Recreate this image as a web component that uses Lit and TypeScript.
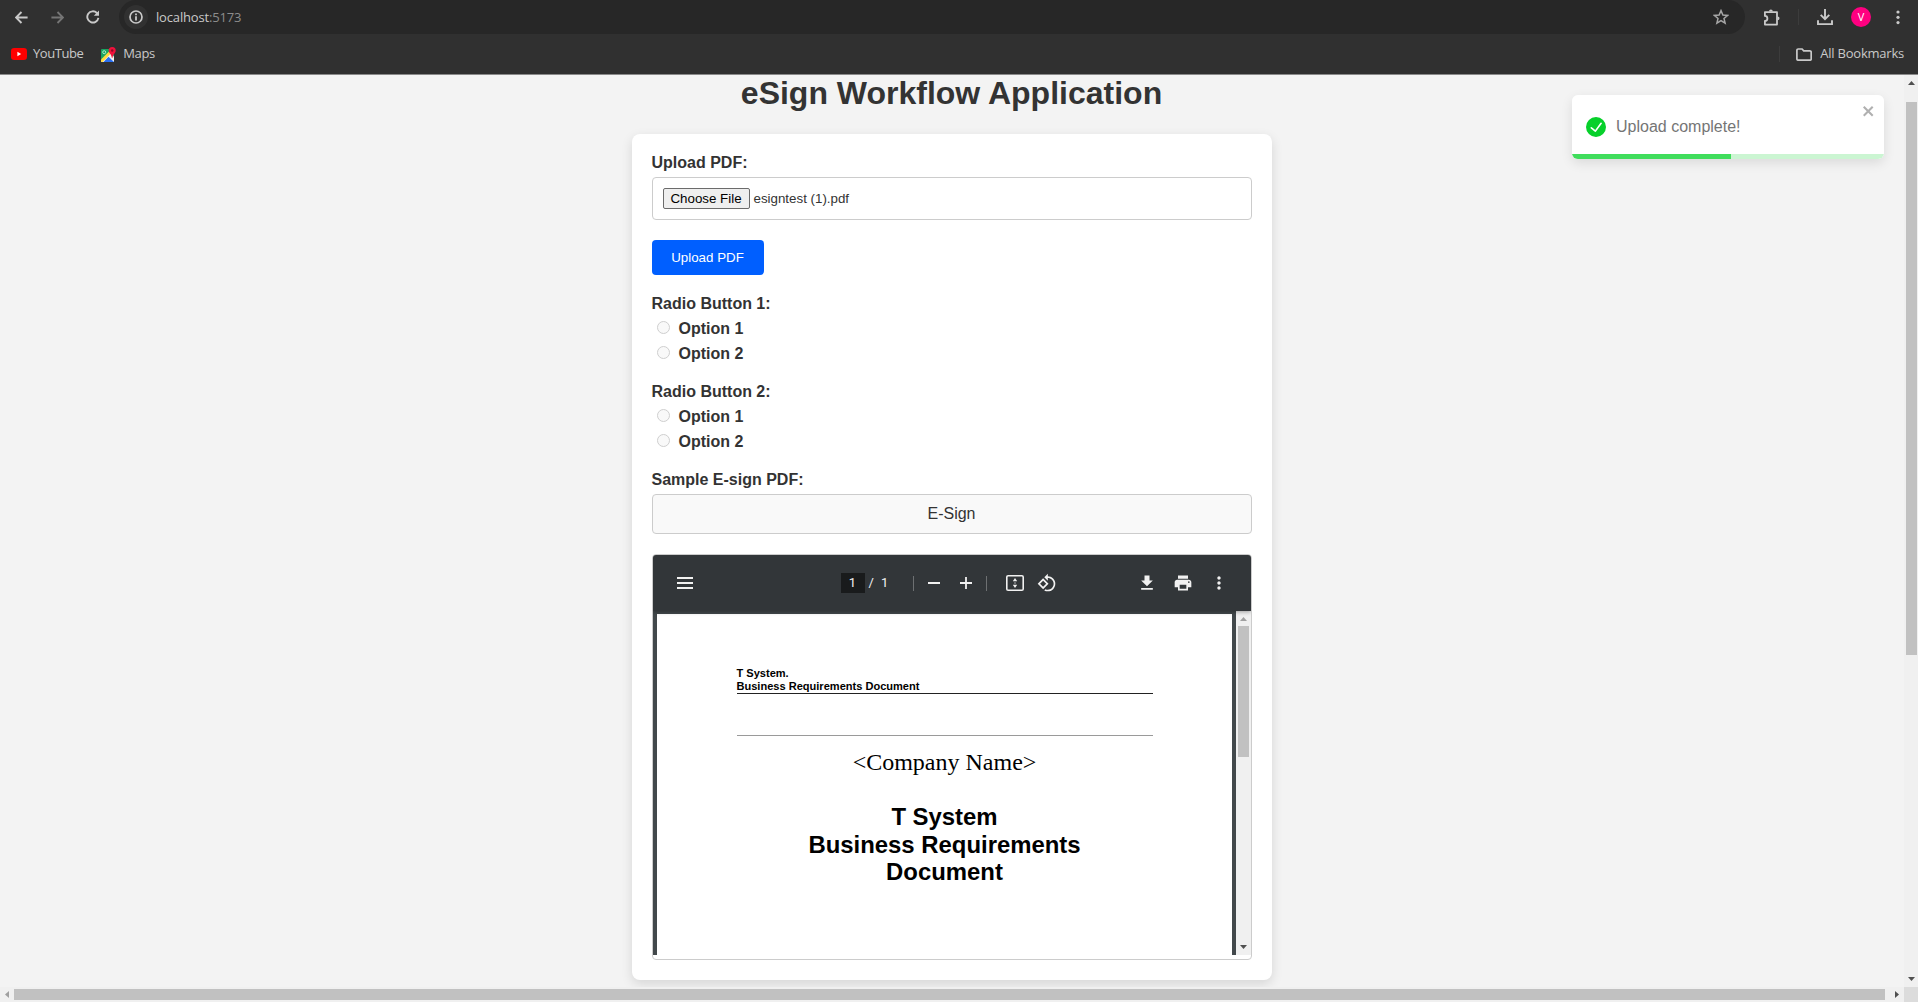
import { LitElement, html, css, svg } from "lit";
import { customElement } from "lit/decorators.js";

const icon = (w: number, h: number, view: string, body: unknown, cls = "") =>
  html`<svg class="icon ${cls}" width=${w} height=${h} viewBox=${view} aria-hidden="true">${body}</svg>`;

const arrowBack = svg`<path d="M6.5 1 1 6.5 6.5 12M1.2 6.5H12.6" fill="none" stroke="currentColor" stroke-width="1.9"/>`;
const arrowForward = svg`<path d="M6.5 1 12 6.5 6.5 12M.4 6.5H11.8" fill="none" stroke="currentColor" stroke-width="1.9"/>`;
const reload = svg`<path d="M12.4 7.9A5.6 5.6 0 1 1 10.9 3L12 4.2" fill="none" stroke="currentColor" stroke-width="1.9"/><path d="M13 .6V5.8H7.8Z" fill="currentColor"/>`;
const info = svg`<circle cx="7" cy="7" r="6" fill="none" stroke="currentColor" stroke-width="1.7"/><path d="M6.1 6.2h1.8v4.2H6.1zM6.1 3.6h1.8v1.7H6.1z" fill="currentColor"/>`;
const star = svg`<path d="M8 1.6 9.9 6l4.7.4-3.6 3.1 1.1 4.6L8 11.6l-4.1 2.5L5 9.5 1.4 6.4 6.1 6Z" fill="none" stroke="currentColor" stroke-width="1.5"/>`;
const puzzle = svg`<path d="M1.9 3.1H14V15.6H1.9V11.9A2.5 2.5 0 0 0 1.9 6.9Z" fill="none" stroke="currentColor" stroke-width="1.8" stroke-linejoin="round"/><path d="M6 2.5a1.9 1.9 0 0 1 3.8 0ZM14.6 7.4a1.9 1.9 0 0 1 0 3.8Z" fill="currentColor"/>`;
const tray = svg`<path d="M8 0v9.6M3.7 5.8 8 10.1l4.3-4.3M1 11.2V15.1H15V11.2" fill="none" stroke="currentColor" stroke-width="1.9"/>`;
const dots = svg`<circle cx="2" cy="2" r="1.6"/><circle cx="2" cy="7.3" r="1.6"/><circle cx="2" cy="12.6" r="1.6"/>`;
const youtube = svg`<rect width="16" height="12" rx="3.2" fill="#f00"/><path d="M6.4 3.7V8.3L10.2 6Z" fill="#fff"/>`;
const maps = svg`<rect x="0" y="2" width="13" height="13" rx="1" fill="#1aa260"/><path d="M0 14.5 9 5.5l4 4V15H0Z" fill="#f2f2f2"/><path d="M2.5 15 7.5 9.8 13 15Z" fill="#2a6ff0"/><path d="M0 12.4 8 4.5l2 2L1.5 15H0Z" fill="#ffd83d"/><circle cx="3.2" cy="5.2" r="1.5" fill="none" stroke="#b9f0d3" stroke-width=".9"/><path d="M11.2 0a3.5 3.5 0 0 1 3.5 3.5c0 2.7-2.8 3.7-3.1 7.3h-.8C10.5 7.2 7.7 6.2 7.7 3.5A3.5 3.5 0 0 1 11.2 0Z" fill="#f0113c"/><circle cx="11.2" cy="3.5" r="1.2" fill="#8c0b24"/>`;
const folder = svg`<path d="M.9 2.3Q.9 1 2.2 1H6.1L7.7 2.9H13.9Q15.2 2.9 15.2 4.2V11Q15.2 12.2 13.9 12.2H2.2Q.9 12.2.9 11Z" fill="none" stroke="currentColor" stroke-width="1.7"/>`;
const menu = svg`<path d="M0 0h16v2H0zM0 5h16v2H0zM0 10h16v2H0z"/>`;
const minus = svg`<path d="M0 5h12v2H0z"/>`;
const plus = svg`<path d="M0 5.1h5.1V0h1.8v5.1H12v1.8H6.9V12H5.1V6.9H0z"/>`;
const fit = svg`<rect x=".8" y=".8" width="16.4" height="14.4" rx="1.3" fill="none" stroke="currentColor" stroke-width="1.6"/><path d="M9 3 11.2 6.2H6.8ZM9 13 11.2 9.8H6.8ZM8.4 7.4h1.2v1.2H8.4z"/>`;
const rotate = svg`<path d="M7.34 6.41L.86 12.9l6.49 6.48 6.49-6.48-6.5-6.49zM3.69 12.9l3.66-3.66L11 12.9l-3.66 3.66-3.65-3.66zm15.67-6.26C17.61 4.88 15.3 4 13 4V.76L8.76 5 13 9.24V6c1.79 0 3.58.68 4.95 2.05 2.73 2.73 2.73 7.17 0 9.9C16.58 19.32 14.79 20 13 20c-.97 0-1.94-.21-2.84-.61l-1.49 1.49C10.02 21.62 11.51 22 13 22c2.3 0 4.61-.88 6.36-2.64 3.52-3.51 3.52-9.21 0-12.72z"/>`;
const save = svg`<path d="M19 9h-4V3H9v6H5l7 7 7-7zM5 18v2h14v-2H5z"/>`;
const printer = svg`<path d="M19 8H5c-1.66 0-3 1.34-3 3v6h4v4h12v-4h4v-6c0-1.66-1.34-3-3-3zm-3 11H8v-5h8v5zm3-7c-.55 0-1-.45-1-1s.45-1 1-1 1 .45 1 1-.45 1-1 1zm-1-9H6v4h12V3z"/>`;
const more = svg`<path d="M12 8c1.1 0 2-.9 2-2s-.9-2-2-2-2 .9-2 2 .9 2 2 2zm0 2c-1.1 0-2 .9-2 2s.9 2 2 2 2-.9 2-2-.9-2-2-2zm0 6c-1.1 0-2 .9-2 2s.9 2 2 2 2-.9 2-2-.9-2-2-2z"/>`;
const check = svg`<path d="M12 0a12 12 0 1 0 12 12A12.014 12.014 0 0 0 12 0zm6.927 8.2-6.845 9.289a1.011 1.011 0 0 1-1.43.188l-4.888-3.908a1 1 0 1 1 1.25-1.562l4.076 3.261 6.227-8.451a1 1 0 1 1 1.61 1.183z"/>`;
const cross = svg`<path fill-rule="evenodd" d="M7.71 8.23l3.75 3.75-1.48 1.48-3.75-3.75-3.75 3.75L1 11.98l3.75-3.75L1 4.48 2.48 3l3.75 3.75L9.98 3l1.48 1.48-3.75 3.75z"/>`;

const triangle = (dir: "up" | "down" | "left" | "right") => {
  const d = { up: "M0 4 3.5 0 7 4Z", down: "M0 0H7L3.5 4Z", left: "M4 0V7L0 3.5Z", right: "M0 0V7L4 3.5Z" }[dir];
  const flat = dir === "up" || dir === "down";
  return icon(flat ? 7 : 4, flat ? 4 : 7, flat ? "0 0 7 4" : "0 0 4 7", svg`<path d=${d}/>`, dir);
};

@customElement("browser-chrome")
export class BrowserChrome extends LitElement {
  static styles = css`
    :host { display: block; height: 74px; background: #303030; border-bottom: 1px solid #8a8a8a; color: #c9c9c9; font: 13px/20px "Open Sans", "Noto Sans", sans-serif; }
    .icon { display: block; flex: none; fill: currentColor; }
    .nav { display: flex; align-items: center; height: 34px; padding-left: 15px; }
    .forward { margin-left: 23px; color: #757575; }
    .reload { margin-left: 22px; }
    .bar { display: flex; align-items: center; height: 34px; width: 1626px; box-sizing: border-box; margin-left: 19px; padding: 0 16px 0 5px; border-radius: 17px; background: #272727; }
    .site { display: grid; place-items: center; width: 24px; height: 24px; border-radius: 50%; background: #313131; }
    .url { flex: 1; margin-left: 8px; letter-spacing: -0.16px; }
    .port { color: #8c8c8c; }
    .star { color: #a6a6a6; }
    .puzzle { margin-left: 18px; }
    .rule { width: 1px; height: 16px; background: #3c3c3c; }
    .rule.first { margin: 0 18px; }
    .avatar { display: grid; place-items: center; width: 20px; height: 20px; margin: 0 25px 0 18px; border-radius: 50%; background: #ff0080; color: #fff; font-size: 11px; }
    .marks { display: flex; align-items: center; height: 40px; padding: 0 14px 0 11px; }
    .mark { display: flex; align-items: center; }
    .mark.second { margin-left: 18px; }
    .name, .all { padding-bottom: 2px; }
    .name { margin-left: 6px; }
    .youtube { letter-spacing: -0.45px; }
    .maps { margin-left: 7px; letter-spacing: -0.4px; }
    .grow { flex: 1; }
    .all { margin-left: 8px; letter-spacing: -0.22px; }
    .folder { margin-left: 16px; }
  `;
  render() {
    return html`
      <div class="nav">
        ${icon(13, 13, "0 0 13 13", arrowBack)}
        ${icon(13, 13, "0 0 13 13", arrowForward, "forward")}
        ${icon(14, 14, "0 0 14 14", reload, "reload")}
        <div class="bar">
          <span class="site">${icon(14, 14, "0 0 14 14", info)}</span>
          <span class="url">localhost<span class="port">:5173</span></span>
          ${icon(16, 16, "0 0 16 16", star, "star")}
        </div>
        ${icon(17, 17, "0 0 17 17", puzzle, "puzzle")}
        <span class="rule first"></span>
        ${icon(16, 16, "0 0 16 16", tray)}
        <span class="avatar">V</span>
        ${icon(4, 15, "0 0 4 15", dots)}
      </div>
      <div class="marks">
        <span class="mark">${icon(16, 12, "0 0 16 12", youtube)}<span class="name youtube">YouTube</span></span>
        <span class="mark second">${icon(15, 15, "0 0 15 15", maps)}<span class="name maps">Maps</span></span>
        <span class="grow"></span>
        <span class="rule"></span>
        ${icon(16, 13, "0 0 16 13", folder, "folder")}
        <span class="all">All Bookmarks</span>
      </div>`;
  }
}

@customElement("pdf-viewer")
export class PdfViewer extends LitElement {
  static styles = css`
    :host { display: block; height: 400px; padding-bottom: 4px; border: 1px solid #ccc; border-radius: 4px; overflow: hidden; background: #fff; }
    .icon { display: block; flex: none; fill: currentColor; }
    .toolbar { position: relative; display: flex; align-items: center; height: 56px; padding-left: 24px; background: #323639; color: #f1f1f1; font: 13px/20px Roboto, sans-serif; box-shadow: 0 1px 4px rgba(0, 0, 0, 0.35); }
    .current { width: 24px; height: 20px; margin-left: 148px; background: #191b1c; text-align: center; }
    .slash { margin-left: 4px; }
    .total { margin-left: 7px; }
    .rule { width: 1px; height: 15px; background: #6d7072; }
    .rule.a { margin: 0 14px 0 25px; }
    .plus { margin-left: 20px; }
    .rule.b { margin: 0 19px 0 14px; }
    .rotate { margin-left: 13px; }
    .save { margin-left: auto; }
    .print { margin-left: 16px; }
    .more { margin: 0 22px 0 16px; }
    .body { display: flex; height: 344px; background: #42484b; }
    .page { flex: 1; margin: 3px 4px 0; padding: 53px 79px 0 80px; box-sizing: border-box; background: #fff; color: #000; text-align: center; overflow: hidden; }
    .head { height: 26px; border-bottom: 1px solid #222; font: bold 11.05px/12.6px "Liberation Sans", Arial, sans-serif; text-align: left; }
    .thin { height: 41px; border-bottom: 1px solid #9a9a9a; }
    .company { margin-top: 12px; font: 24px/28px "Liberation Serif", "Times New Roman", serif; }
    .title { margin-top: 27px; font: bold 23.9px/27.5px "Liberation Sans", Arial, sans-serif; }
    .scroll { display: flex; flex-direction: column; align-items: center; width: 15px; box-sizing: border-box; padding: 6px 0 6px; background: #f0f0f0; color: #a0a0a0; }
    .thumb { width: 11px; height: 131px; margin: 5px 0 auto; background: #c1c1c1; }
    .down { color: #505050; }
  `;
  render() {
    return html`
      <div class="toolbar">
        ${icon(16, 12, "0 0 16 12", menu)}
        <span class="current">1</span><span class="slash">/</span><span class="total">1</span>
        <span class="rule a"></span>
        ${icon(12, 12, "0 0 12 12", minus)}
        ${icon(12, 12, "0 0 12 12", plus, "plus")}
        <span class="rule b"></span>
        ${icon(18, 16, "0 0 18 16", fit)}
        ${icon(20, 20, "0 0 24 24", rotate, "rotate")}
        ${icon(20, 20, "0 0 24 24", save, "save")}
        ${icon(20, 20, "0 0 24 24", printer, "print")}
        ${icon(20, 20, "0 0 24 24", more, "more")}
      </div>
      <div class="body">
        <div class="page">
          <div class="head">T System.<br />Business Requirements Document</div>
          <div class="thin"></div>
          <div class="company">&lt;Company Name&gt;</div>
          <div class="title">T System<br />Business Requirements<br />Document</div>
        </div>
        <div class="scroll">
          ${triangle("up")}
          <div class="thumb"></div>
          ${triangle("down")}
        </div>
      </div>`;
  }
}

@customElement("app-root")
export class AppRoot extends LitElement {
  static styles = css`
    :host { display: block; position: relative; width: 1918px; height: 1002px; overflow: hidden; background: #f3f3f3; color: #333; font: 16px/18px "Liberation Sans", Arial, sans-serif; }
    .icon { display: block; flex: none; fill: currentColor; }
    .frame { display: grid; grid-template-columns: 1904px 14px; grid-template-rows: 912px 15px; }
    .content { padding-right: 1px; overflow: hidden; }
    h1 { height: 59px; margin: 0; font-size: 32px; line-height: 37px; text-align: center; }
    .card { width: 640px; height: 846px; margin: 0 auto; padding: 20px; box-sizing: border-box; border-radius: 8px; background: #fff; box-shadow: 0 4px 12px rgba(0, 0, 0, 0.12); }
    .label { font-weight: bold; }
    .file { display: flex; align-items: center; height: 43px; margin: 5px 0 20px; padding: 0 10px; box-sizing: border-box; border: 1px solid #ccc; border-radius: 4px; font-size: 13.333px; }
    .choose, .upload { padding: 0; font: 13.333px "Liberation Sans", Arial, sans-serif; }
    .choose { width: 87px; height: 21px; margin: 0 4px 0 0; border: 1px solid #6b6b6b; border-radius: 2px; background: #efefef; color: #000; }
    .upload { display: block; width: 112px; height: 35px; border: 0; border-radius: 4px; background: #005fff; color: #fff; }
    .group { display: flex; flex-direction: column; gap: 7px; margin: 20px 0; font-weight: bold; }
    .option { display: flex; height: 18px; padding-left: 5px; }
    .dot { width: 13px; height: 13px; margin: 1px 9px 0 0; box-sizing: border-box; border: 1px solid #cfcfcf; border-radius: 50%; background: #f9f9f9; }
    .sign { height: 40px; margin: 5px 0 20px; box-sizing: border-box; border: 1px solid #ccc; border-radius: 4px; background: #f9f9f9; line-height: 38px; text-align: center; }
    .vbar, .hbar { display: flex; align-items: center; background: #f0f0f0; color: #505050; }
    .vbar { flex-direction: column; padding: 6px 0 6px; }
    .hbar { padding: 0 5px; }
    .left { color: #a0a0a0; }
    .vthumb { width: 11px; height: 553px; margin: 17px 0 auto 1px; background: #c1c1c1; }
    .hthumb { width: 1871px; height: 11px; margin: 0 auto 0 5px; background: #c1c1c1; }
    .corner { background: #dcdcdc; }
    .toast { position: absolute; top: 95px; left: 1572px; display: flex; align-items: center; width: 312px; height: 64px; padding: 0 14px; box-sizing: border-box; border-radius: 6px; overflow: hidden; background: #fff; color: #757575; }
    .shade { position: absolute; top: 95px; left: 1572px; width: 312px; height: 64px; border-radius: 6px; box-shadow: 0 4px 12px rgba(0, 0, 0, 0.1); }
    .ok { color: #07d02b; }
    .message { margin-left: 10px; }
    .close { position: absolute; top: 8px; right: 8px; color: #b0b0b0; }
    .track { position: absolute; left: 0; bottom: 0; width: 100%; height: 5px; background: #cbf5d2; }
    .fill { width: 51%; height: 5px; background: #40dd5c; }
  `;
  private group(name: string) {
    return html`<div class="group">
      <span>${name}</span>
      ${["Option 1", "Option 2"].map((o) => html`<label class="option"><span class="dot"></span>${o}</label>`)}
    </div>`;
  }
  render() {
    return html`
      <browser-chrome></browser-chrome>
      <div class="frame">
        <main class="content">
          <h1>eSign Workflow Application</h1>
          <section class="card">
            <div class="label">Upload PDF:</div>
            <div class="file"><button class="choose">Choose File</button>esigntest (1).pdf</div>
            <button class="upload">Upload PDF</button>
            ${this.group("Radio Button 1:")} ${this.group("Radio Button 2:")}
            <div class="label">Sample E-sign PDF:</div>
            <div class="sign">E-Sign</div>
            <pdf-viewer></pdf-viewer>
          </section>
        </main>
        <div class="vbar">${triangle("up")}<div class="vthumb"></div>${triangle("down")}</div>
        <div class="hbar">${triangle("left")}<div class="hthumb"></div>${triangle("right")}</div>
        <div class="corner"></div>
      </div>
      <div class="shade"></div>
      <div class="toast">
        ${icon(20, 20, "0 0 24 24", check, "ok")}
        <span class="message">Upload complete!</span>
        ${icon(14, 16, "0 0 14 16", cross, "close")}
        <div class="track"><div class="fill"></div></div>
      </div>`;
  }
}
